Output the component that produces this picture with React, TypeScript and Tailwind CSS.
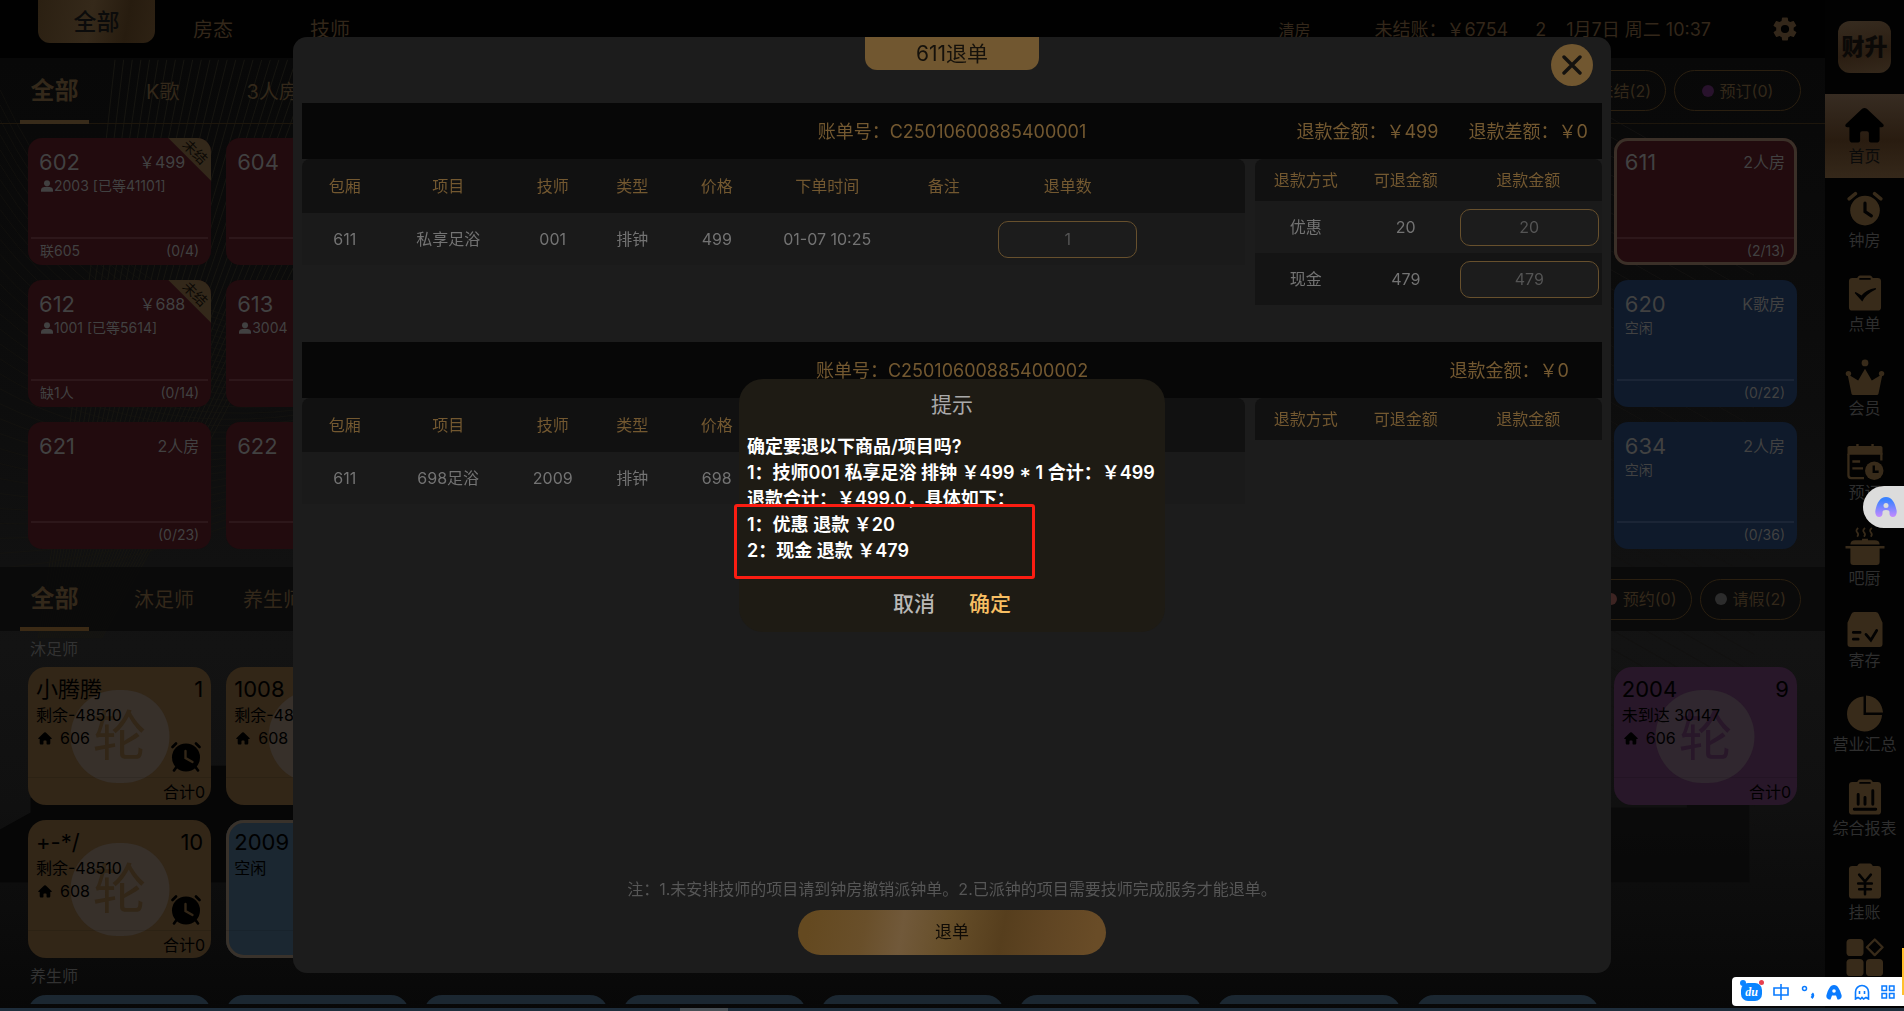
import { useState, type ReactNode } from "react"

interface Room {
  no: string
  kind?: string
  amount?: string
  guest?: string
  status?: string
  note?: string
  usage?: string
  tone: "red" | "blue"
  selected?: boolean
  unpaid?: boolean
  place?: string
}

interface Tech {
  name: string
  order?: string
  status?: string
  room?: string
  total?: string
  tone: "gold" | "blue" | "purple"
  round?: boolean
  alarm?: boolean
  selected?: boolean
  place?: string
}

interface Bill {
  id: string
  sums: string[]
  sumsClass: string
  rows: { room: string; item: string; tech: string; type: string; price: string; time: string; qty?: string }[]
  refunds: { way: string; max: string }[]
}

const rooms: Room[] = [
  { no: "602", amount: "￥499", guest: "2003 [已等41101]", note: "联605", usage: "(0/4)", tone: "red", unpaid: true },
  { no: "604", tone: "red" },
  { no: "611", kind: "2人房", usage: "(2/13)", tone: "red", selected: true, place: "col-start-9" },
  { no: "612", amount: "￥688", guest: "1001 [已等5614]", note: "缺1人", usage: "(0/14)", tone: "red", unpaid: true },
  { no: "613", guest: "3004", tone: "red" },
  { no: "620", kind: "K歌房", status: "空闲", usage: "(0/22)", tone: "blue", place: "col-start-9" },
  { no: "621", kind: "2人房", usage: "(0/23)", tone: "red" },
  { no: "622", tone: "red" },
  { no: "634", kind: "2人房", status: "空闲", usage: "(0/36)", tone: "blue", place: "col-start-9" },
]

const footTechs: Tech[] = [
  { name: "小腾腾", order: "1", status: "剩余-48510", room: "606", total: "合计0", tone: "gold", round: true, alarm: true },
  { name: "1008", status: "剩余-48510", room: "608", tone: "gold", round: true },
  { name: "2004", order: "9", status: "未到达 30147", room: "606", total: "合计0", tone: "purple", round: true, place: "col-start-9" },
  { name: "+-*/", order: "10", status: "剩余-48510", room: "608", total: "合计0", tone: "gold", round: true, alarm: true },
  { name: "2009", status: "空闲", tone: "blue", selected: true },
]

const bills: Bill[] = [
  {
    id: "C25010600885400001",
    sums: ["退款金额：￥499", "退款差额：￥0"],
    sumsClass: "pr-[14px]",
    rows: [{ room: "611", item: "私享足浴", tech: "001", type: "排钟", price: "499", time: "01-07 10:25", qty: "1" }],
    refunds: [
      { way: "优惠", max: "20" },
      { way: "现金", max: "479" },
    ],
  },
  {
    id: "C25010600885400002",
    sums: ["退款金额：￥0"],
    sumsClass: "pr-[33px]",
    rows: [{ room: "611", item: "698足浴", tech: "2009", type: "排钟", price: "698", time: "" }],
    refunds: [],
  },
]

function HouseIcon({ className }: { className?: string }) {
  return (
    <svg viewBox="0 0 40 38" className={className} fill="currentColor">
      <path d="M17.600 1.800a4 4 0 0 1 4.800 0L39 17.500c1.500 1.600.5 3.200-1.200 3.200H35.500V33a3.500 3.500 0 0 1-3.500 3.500h-5.500a2 2 0 0 1-2-2V27a2 2 0 0 0-2-2h-5a2 2 0 0 0-2 2v7.500a2 2 0 0 1-2 2H8A3.500 3.500 0 0 1 4.500 33V20.700H2.200C.5 20.700-.5 19.100 1 17.500z" />
    </svg>
  )
}

function PersonIcon() {
  return (
    <svg viewBox="0 0 12 12" className="size-3" fill="currentColor">
      <circle cx="6" cy="3.200" r="3" />
      <path d="M0 11.800V10c0-2 2-3.200 6-3.200s6 1.200 6 3.200v1.800z" />
    </svg>
  )
}

function AlarmIcon({ className, hand }: { className?: string; hand: string }) {
  return (
    <svg viewBox="0 0 34 34" className={className} fill="none" strokeLinecap="round">
      <circle cx="17" cy="18" r="14" fill="currentColor" />
      <path d="M2 7 8 2M32 7l-6-5" stroke="currentColor" strokeWidth="3.200" />
      <path d="M17 11v8l6 4" stroke={hand} strokeWidth="3" />
    </svg>
  )
}

function Clipboard({ children, tab = true }: { children: ReactNode; tab?: boolean }) {
  return (
    <svg viewBox="0 0 36 38" className="h-[37px] w-9" fill="none" strokeLinecap="round">
      <path
        d="M5 3h5c1-2 2-2.500 4-2.500h8c2 0 3 .5 4 2.500h5a3.500 3.500 0 0 1 3.500 3.500V33A3.500 3.500 0 0 1 31 36.500H5A3.500 3.500 0 0 1 1.500 33V6.500A3.500 3.500 0 0 1 5 3z"
        fill="currentColor"
      />
      {tab && <path d="M13 4h10" stroke="#020202" strokeWidth="2" />}
      {children}
    </svg>
  )
}

const icons = {
  clock: <AlarmIcon className="h-[37px] w-9" hand="#020202" />,
  order: (
    <Clipboard>
      <path d="m8 18 7 8c3-6 8-9 14-12-7 1-11 3.500-14.500 8z" fill="#020202" stroke="#020202" strokeWidth="1.500" />
    </Clipboard>
  ),
  crown: (
    <svg viewBox="0 0 40 38" className="h-[37px] w-10" fill="currentColor">
      <circle cx="20" cy="4" r="3.500" />
      <circle cx="3" cy="15" r="2.800" />
      <circle cx="37" cy="15" r="2.800" />
      <path d="M2 15.500 13 22l7-12 7 12 11-6.500-4.200 20.500q-.4 1-1.500 1H7.700q-1.100 0-1.500-1z" />
    </svg>
  ),
  booking: (
    <svg viewBox="0 0 40 38" className="h-[37px] w-10" fill="none">
      <path d="M2 12V5q0-2 2-2h7V1h2.500v2h13V1H29v2h7q2 0 2 2v7z" fill="currentColor" />
      <path d="M3 11v22q0 3 3 3h13M36.800 10v8M7 19h8M7 26h11" stroke="currentColor" strokeWidth="2.400" />
      <circle cx="29.500" cy="28.500" r="9.500" fill="currentColor" />
      <path d="M29 23v6.500h5" stroke="#020202" strokeWidth="2.400" />
    </svg>
  ),
  pot: (
    <svg viewBox="0 0 40 40" className="h-[39px] w-10" fill="none">
      <path d="M13 1q-3 2.500-1 4.500T12 10M20 1q-3 2.500-1 4.500T19 10M27 1q-3 2.500-1 4.500T26 10" stroke="currentColor" strokeWidth="1.800" />
      <path d="M5 18q0-4.500 5-4.500h7V12h6v1.500h7q5 0 5 4.500zM0 19.500h40V22h-5v14q0 3-3 3H8q-3 0-3-3V22H0z" fill="currentColor" />
    </svg>
  ),
  store: (
    <svg viewBox="0 0 36 38" className="h-[37px] w-9" fill="none" strokeLinecap="round">
      <path d="M7 1h22q2 0 3 2l4 9v22q0 3-3 3H3q-3 0-3-3V12L4 3q1-2 3-2z" fill="currentColor" />
      <path d="M6 22h7M6 29h5M19 24l5 6 6-10" stroke="#020202" strokeWidth="2.800" />
    </svg>
  ),
  pie: (
    <svg viewBox="0 0 38 38" className="h-[37px] w-[38px]" fill="currentColor">
      <path d="M17.500 1.500v19h19A18 18 0 1 1 17.500 1.500z" />
      <path d="M20 .5Q35.500 2 37.500 18H20z" />
    </svg>
  ),
  report: (
    <Clipboard>
      <path d="M11 16v10M18 19v7M26 12v14M7 31h22" stroke="#020202" strokeWidth="3" />
    </Clipboard>
  ),
  debt: (
    <Clipboard tab={false}>
      <path d="m12 12 6 7 6-7M18 19v13M11 21h14M12 27h12" stroke="#020202" strokeWidth="2.600" />
    </Clipboard>
  ),
  apps: (
    <svg viewBox="0 0 40 40" className="h-[39px] w-10 shrink-0" fill="currentColor">
      <rect x="1" y="1" width="17.500" height="17.500" rx="4" />
      <rect x="1" y="21.500" width="17.500" height="17.500" rx="4" />
      <rect x="21" y="21.500" width="17.500" height="17.500" rx="4" />
      <path d="m30 1.500 8 8-8 8-8-8z" fill="none" stroke="currentColor" strokeWidth="2.400" strokeLinejoin="round" />
    </svg>
  ),
}

const menu = [
  { label: "钟房", icon: icons.clock },
  { label: "点单", icon: icons.order },
  { label: "会员", icon: icons.crown },
  { label: "预订", icon: icons.booking },
  { label: "吧厨", icon: icons.pot },
  { label: "寄存", icon: icons.store },
  { label: "营业汇总", icon: icons.pie },
  { label: "综合报表", icon: icons.report },
  { label: "挂账", icon: icons.debt },
]

function Backdrop() {
  const fan = Array.from({ length: 34 }, (_, i) => i)
  return (
    <svg className="absolute inset-0 size-full" viewBox="0 0 1904 1011" preserveAspectRatio="none" fill="none">
      <g stroke="#171510">
        {fan.map(i => (
          <path key={i} d={`M${120 + i * 9} 60Q${90 + i * 6} 330 ${40 + i * 2} 640`} />
        ))}
        {fan.map(i => (
          <path key={i} d={`M0 ${90 + i * 15}Q${130 + i * 2} ${360 + i * 6} 400 ${330 + i * 4}`} opacity="0.600" />
        ))}
      </g>
      <g stroke="#121110">
        {fan.map(i => (
          <path key={i} d={`M1500 ${20 + i * 19}L1830 ${200 + i * 19}`} />
        ))}
      </g>
      <path d="M0 832 32 815V800h90v-14h90v-18h120v117H0z" fill="#060606" />
      <path d="M1600 800h60v10h100v-8h65v83h-225z" fill="#070707" opacity="0.600" />
    </svg>
  )
}

function RoomCard({ room }: { room: Room }) {
  const tone = room.tone === "red" ? "bg-[#220b0e]" : "bg-[#0f1a2b]"
  return (
    <article
      className={`relative flex h-[127px] flex-col overflow-hidden rounded-[14px] text-[#414141] ${tone} ${room.place ?? ""} ${
        room.selected ? "ring-3 ring-[#3b3028] ring-inset" : ""
      }`}
    >
      <div className={`flex items-center justify-between pt-[10px] pl-[11px] leading-7 ${room.unpaid ? "pr-[26px]" : "pr-3"}`}>
        <h3 className="text-[22px]">{room.no}</h3>
        <span className="text-base">{room.amount ?? room.kind}</span>
      </div>
      <div className="flex grow items-start px-[11px] text-sm leading-5">
        {room.guest && (
          <span className="flex items-center gap-px whitespace-nowrap pl-[2px]">
            <PersonIcon />
            {room.guest}
          </span>
        )}
        {room.status}
      </div>
      <div className="mx-[3px] flex h-7 justify-between border-t-2 border-white/5 px-[9px] text-sm leading-6">
        <span>{room.note}</span>
        <span>{room.usage}</span>
      </div>
      {room.unpaid && (
        <div className="absolute top-0 right-0 size-[43px] bg-[#33281a] text-[#0c0905] [clip-path:polygon(0_0,100%_0,100%_100%)]">
          <span className="absolute top-[6px] left-[13px] rotate-45 text-sm leading-4">未结</span>
        </div>
      )}
    </article>
  )
}

const techTones = {
  gold: "bg-[#322617]",
  blue: "bg-[#1b2731]",
  purple: "bg-[#281729]",
}

const roundTones = {
  gold: "bg-[#37302a] text-[#322617]",
  blue: "",
  purple: "bg-[#30272f] text-[#281729]",
}

function TechCard({ tech }: { tech: Tech }) {
  return (
    <article
      className={`relative flex h-[138px] flex-col overflow-hidden rounded-[18px] text-black ${techTones[tech.tone]} ${tech.place ?? ""} ${
        tech.selected ? "ring-3 ring-[#39322b] ring-inset" : ""
      }`}
    >
      {tech.round && (
        <span
          className={`absolute top-[23px] left-1/2 flex h-[93px] w-[99px] -translate-x-1/2 items-center justify-center rounded-full text-[54px] ${roundTones[tech.tone]}`}
        >
          轮
        </span>
      )}
      <div className="relative flex justify-between px-2 pt-[7px] text-[22px] leading-[30px]">
        <h3>{tech.name}</h3>
        <span>{tech.order}</span>
      </div>
      <p className="relative px-2 leading-[22px] whitespace-nowrap">{tech.status}</p>
      {tech.room && (
        <p className="relative flex items-center gap-2 pl-[10px] leading-6">
          <HouseIcon className="h-[13px] w-[14px]" />
          {tech.room}
        </p>
      )}
      <div className="relative mt-auto h-7 border-t border-black/10 px-[6px] text-right leading-7">{tech.total}</div>
      {tech.alarm && (
        <svg viewBox="0 0 30 30" className="absolute right-[10px] bottom-[33px] size-[30px]" fill="none" strokeLinecap="round">
          <circle cx="15" cy="15.500" r="14" fill="currentColor" />
          <path d="M1.500 5 5 1.500M28.500 5 25 1.500M5.500 25 3 28.500M24.500 25l2.500 3.500" stroke="currentColor" strokeWidth="2.600" />
          <path d="M14.500 9v7l7 4" stroke="#322617" strokeWidth="2.400" />
        </svg>
      )}
    </article>
  )
}

function Pill({ dot, children }: { dot: string; children: ReactNode }) {
  return (
    <button className="flex h-[41px] items-center gap-[6px] rounded-full border border-[#2a1f10] px-[14px] text-base text-[#33281a]">
      <span className={`size-3 rounded-full ${dot}`} />
      {children}
    </button>
  )
}

function QtyInput({ value, label }: { value: string; label: string }) {
  return (
    <input
      aria-label={label}
      defaultValue={value}
      className="block h-[37px] w-[139px] rounded-[10px] border border-[#67502d] bg-[#1c1c1c] text-center text-base text-[#545454]"
    />
  )
}

function BillBlock({ bill }: { bill: Bill }) {
  return (
    <section>
      <div className="grid h-14 grid-cols-[1fr_auto_1fr] items-center bg-[#070707] pt-[2px] text-lg text-[#735830]">
        <span className="col-start-2">账单号：{bill.id}</span>
        <div className={`flex justify-end gap-[30px] whitespace-nowrap ${bill.sumsClass}`}>
          {bill.sums.map(s => (
            <span key={s}>{s}</span>
          ))}
        </div>
      </div>
      <div className="flex items-start gap-[10px]">
        <table className="grow table-fixed text-center text-base">
          <colgroup>
            <col className="w-[85px]" />
            <col className="w-[122px]" />
            <col className="w-[87px]" />
            <col className="w-[72px]" />
            <col className="w-[97px]" />
            <col className="w-[124px]" />
            <col className="w-[109px]" />
            <col className="w-[139px]" />
            <col />
          </colgroup>
          <thead>
            <tr className="h-[54px] bg-[#111111] text-[#735830]">
              {["包厢", "项目", "技师", "类型", "价格", "下单时间", "备注", "退单数", ""].map((h, i) => (
                <th key={i} className="font-normal first:rounded-tl-lg last:rounded-tr-lg">
                  {h}
                </th>
              ))}
            </tr>
          </thead>
          <tbody>
            {bill.rows.map(r => (
              <tr key={r.item} className="h-[52px] bg-[#1a1a1a] text-[#737373]">
                <td>{r.room}</td>
                <td>{r.item}</td>
                <td>{r.tech}</td>
                <td>{r.type}</td>
                <td>{r.price}</td>
                <td>{r.time}</td>
                <td />
                <td>{r.qty && <QtyInput value={r.qty} label="退单数" />}</td>
                <td />
              </tr>
            ))}
          </tbody>
        </table>
        <table className="w-[347px] shrink-0 table-fixed text-center text-base">
          <colgroup>
            <col className="w-[102px]" />
            <col className="w-[98px]" />
            <col />
          </colgroup>
          <thead>
            <tr className="h-[42px] bg-[#111111] text-[#735830]">
              {["退款方式", "可退金额", "退款金额"].map((h, i) => (
                <th key={i} className="font-normal first:rounded-tl-lg last:rounded-tr-lg">
                  {h}
                </th>
              ))}
            </tr>
          </thead>
          <tbody>
            {bill.refunds.map(r => (
              <tr key={r.way} className="h-[52px] bg-[#1a1a1a] text-[#737373] even:bg-[#141414]">
                <td>{r.way}</td>
                <td>{r.max}</td>
                <td>
                  <div className="flex justify-end pr-[3px]">
                    <QtyInput value={r.max} label={`${r.way}退款金额`} />
                  </div>
                </td>
              </tr>
            ))}
          </tbody>
        </table>
      </div>
    </section>
  )
}

function RefundDialog() {
  return (
    <div className="fixed inset-0 flex justify-center pt-[37px] pb-[38px]">
      <div role="dialog" aria-label="611退单" className="relative flex w-[69.2%] flex-col rounded-[14px] bg-[#1c1c1c] px-[9px]">
        <h2 className="mx-auto h-[33px] w-[174px] rounded-b-xl bg-[#715730] text-center text-[21px] leading-[34px] text-[#15110b]">
          611退单
        </h2>
        <button
          aria-label="关闭"
          className="absolute top-[7px] right-[18px] flex size-[42px] items-center justify-center rounded-full bg-[#715730]"
        >
          <svg viewBox="0 0 20 20" className="size-5" stroke="#14120f" strokeWidth="3.400" strokeLinecap="round">
            <path d="m2 2 16 16M18 2 2 18" />
          </svg>
        </button>
        <div className="mt-[33px] flex grow flex-col gap-[37px]">
          {bills.map(b => (
            <BillBlock key={b.id} bill={b} />
          ))}
        </div>
        <p className="mb-[9px] text-center text-base text-[#565656]">
          注：1.未安排技师的项目请到钟房撤销派钟单。2.已派钟的项目需要技师完成服务才能退单。
        </p>
        <button className="mx-auto mb-[18px] h-[45px] w-[308px] shrink-0 rounded-full bg-[linear-gradient(100deg,#644920_4%,#694f2a_22%,#71593a_34%,#674f2a_48%,#563e1d_66%,#604523_80%,#694c27_96%)] text-[17px] text-[#0e0a05]">
          退单
        </button>
      </div>
    </div>
  )
}

function ConfirmDialog({ onClose }: { onClose: () => void }) {
  return (
    <div className="fixed inset-0 flex items-center justify-center">
      <div role="alertdialog" aria-label="提示" className="relative w-[426px] rounded-[24px] bg-[#1e1b14] px-2 pt-[11px]">
        <h2 className="text-center text-[21px] leading-[30px] text-[#a9a9a9]">提示</h2>
        <div className="mt-[14px] text-lg leading-[26px] font-semibold whitespace-nowrap text-white">
          <p>确定要退以下商品/项目吗?</p>
          <p>1：技师001 私享足浴 排钟 ￥499 * 1 合计：￥499</p>
          <p>退款合计：￥499.0，具体如下：</p>
          <p>1：优惠 退款 ￥20</p>
          <p>2：现金 退款 ￥479</p>
        </div>
        <div className="flex justify-center gap-[34px] pt-[25px] pb-[13px] text-[21px] leading-[30px] font-medium">
          <button onClick={onClose} className="text-[#b9b8b6]">
            取消
          </button>
          <button onClick={onClose} className="text-[#f8bf63]">
            确定
          </button>
        </div>
        <div className="absolute top-[125px] -left-[5px] h-[75px] w-[301px] rounded-[3px] border-3 border-[#fb1d12]" />
      </div>
    </div>
  )
}

function ImeBar() {
  return (
    <div className="fixed right-0 bottom-[5px] flex h-[29px] w-[172px] items-center justify-between rounded-l-sm bg-white px-[9px] text-[#0a7bff]">
      <span className="relative flex h-[18px] w-[21px] items-center justify-center rounded-[7px] bg-[#0a84ff] font-['Liberation_Serif',serif] text-xs font-bold text-white italic">
        du
        <span className="absolute -top-[3px] -left-px size-[6px] rounded-full bg-[#0a84ff]" />
        <span className="absolute -top-[3px] -right-[2px] size-[5px] rounded-full bg-[#e8404f]" />
      </span>
      <svg viewBox="0 0 16 16" className="size-4" fill="none" stroke="currentColor" strokeWidth="1.600">
        <path d="M1 4h14v7H1zM8 0v16" />
      </svg>
      <svg viewBox="0 0 14 16" className="h-4 w-[14px]" fill="none" stroke="currentColor" strokeWidth="1.500">
        <circle cx="3.500" cy="4.500" r="2" />
        <path d="M11 9.500q2 2-.5 4.500" strokeWidth="2.600" />
      </svg>
      <svg viewBox="0 0 16 16" className="size-4" fill="currentColor">
        <path d="M8 1c4 0 6 5 7.500 10 .8 3-1.500 4.500-4 4.500L10 11.500H6L4.500 15.500c-2.500 0-4.800-1.500-4-4.500C2 6 4 1 8 1z" />
        <circle cx="8" cy="7" r="1.800" fill="#fff" />
      </svg>
      <svg viewBox="0 0 16 16" className="size-4" fill="none" stroke="currentColor" strokeWidth="1.600">
        <path d="M1.500 15V8a6.500 6.500 0 0 1 13 0v7l-2.500-1.500L9.500 15 8 13.500 6.500 15 4 13.500zM5.500 7v3M10.500 7v3" />
      </svg>
      <svg viewBox="0 0 14 14" className="size-[14px]" fill="none" stroke="currentColor" strokeWidth="1.500">
        <path d="M1 1h4.500v4.500H1zM8.500 1H13v4.500H8.500zM1 8.500h4.500V13H1zM8.500 8.500H13V13H8.500z" />
      </svg>
    </div>
  )
}

export default function App() {
  const [confirming, setConfirming] = useState(true)

  return (
    <div className="relative flex h-screen flex-col overflow-hidden bg-[#0b0b0b] font-['Inter','Noto_Sans_CJK_SC',sans-serif] text-base">
      <div className="flex min-h-0 grow">
        <main className="relative flex min-w-0 grow flex-col bg-[linear-gradient(180deg,#080808_6%,#0d0d0d_40%,#131313_64%,#101010_80%,#080808)]">
          <Backdrop />
          <header className="relative flex h-[58px] shrink-0 items-center bg-[#010101] pr-[26px] pl-[38px] text-[#33271a]">
            <button className="h-[43px] w-[117px] self-start rounded-b-xl bg-[linear-gradient(100deg,#2b2012,#35291a_45%,#271c0f_75%,#2e2214)] pt-[2px] text-[23px] font-medium text-[#0b0b0b]">
              全部
            </button>
            <nav className="flex grow gap-[77px] pt-px pl-[38px] text-xl">
              <button>房态</button>
              <button>技师</button>
            </nav>
            <div className="flex items-center pt-px text-lg whitespace-nowrap">
              <span className="text-base">清房</span>
              <span className="ml-16">未结账：￥6754</span>
              <span className="ml-[27px]">2</span>
              <span className="ml-5">1月7日 周二 10:37</span>
            </div>
            <button aria-label="设置" className="ml-[60px]">
              <svg viewBox="0 0 24 24" className="size-7" fill="currentColor">
                <path d="M19.400 13a7.500 7.500 0 0 0 0-2l2.100-1.600a.5.5 0 0 0 .1-.6l-2-3.500a.5.5 0 0 0-.6-.2l-2.500 1a7.300 7.300 0 0 0-1.700-1l-.4-2.600a.5.500 0 0 0-.5-.4h-4a.5.500 0 0 0-.5.400L9 5.100a7.700 7.700 0 0 0-1.700 1l-2.500-1a.5.500 0 0 0-.6.200l-2 3.500a.5.500 0 0 0 .1.600L4.500 11a7.900 7.900 0 0 0 0 2l-2.100 1.600a.5.500 0 0 0-.1.600l2 3.500c.1.200.4.300.6.200l2.500-1c.5.400 1.100.7 1.700 1l.4 2.600c0 .2.200.4.500.4h4c.2 0 .5-.2.500-.4l.4-2.600c.6-.3 1.200-.6 1.700-1l2.500 1c.2.100.5 0 .6-.2l2-3.500a.5.500 0 0 0-.1-.6zM12 15.500a3.500 3.500 0 1 1 0-7 3.500 3.500 0 0 1 0 7z" />
              </svg>
            </button>
          </header>

          <div className="relative flex h-[66px] shrink-0 items-center justify-between border-b border-[#1d160c] pr-6 pl-5 text-xl text-[#33281a]">
            <nav className="flex h-full items-center">
              <button className="h-[66px] w-[69px] self-start border-b-4 border-[#382b1a] pt-1 text-2xl font-bold">全部</button>
              <button className="ml-[57px] pt-[2px]">K歌</button>
              <button className="ml-[67px] pt-[2px]">3人房</button>
            </nav>
            <div className="flex gap-2">
              <Pill dot="bg-[#220b0e]">未结(2)</Pill>
              <button className="flex h-[41px] w-[127px] items-center justify-center gap-[6px] rounded-full border border-[#2a1f10] text-base">
                <span className="size-3 rounded-full bg-[#28122c]" />
                预订(0)
              </button>
            </div>
          </div>

          <section className="relative grid shrink-0 grid-cols-9 gap-[15px] px-7 pt-[14px] pb-[18px]">
            {rooms.map(r => (
              <RoomCard key={r.no} room={r} />
            ))}
          </section>

          <div className="relative flex h-16 shrink-0 items-center justify-between bg-[#0a0a0a]/90 pr-6 pl-5 text-xl text-[#33281a]">
            <nav className="flex h-full items-center">
              <button className="h-16 w-[69px] self-start border-b-4 border-[#3b2a15] pt-1 text-2xl font-bold">全部</button>
              <button className="ml-[45px] pt-px">沐足师</button>
              <button className="ml-[49px] pt-px">养生师</button>
            </nav>
            <div className="flex gap-2">
              <Pill dot="bg-[#3d2422]">预约(0)</Pill>
              <Pill dot="bg-[#2c2c2c]">请假(2)</Pill>
            </div>
          </div>

          <section className="relative mb-[4px] min-h-0 grow overflow-hidden px-7 text-[#323232]">
            <h3 className="px-[2px] leading-[36px]">沐足师</h3>
            <div className="grid grid-cols-9 gap-[15px]">
              {footTechs.map(t => (
                <TechCard key={t.name} tech={t} />
              ))}
            </div>
            <h3 className="px-[2px] leading-[37px]">养生师</h3>
            <div className="grid grid-cols-9 gap-[15px]">
              {Array.from({ length: 8 }, (_, i) => (
                <div key={i} className="h-[138px] rounded-[18px] bg-[#1b2731]" />
              ))}
            </div>
          </section>
        </main>

        <aside className="w-[79px] shrink-0 overflow-hidden bg-[#020202] text-[#2e2e2e]">
          <div className="mx-auto mt-[21px] mb-[21px] flex h-[52px] w-[53px] items-center justify-center rounded-xl bg-[linear-gradient(170deg,#372c20,#2b1e12_60%,#35291c)] text-[23px] font-black text-[#0b0907]">
            财升
          </div>
          <nav>
            <a
              href="#"
              className="flex h-[84px] flex-col items-center bg-[linear-gradient(180deg,#372c22,#291c10_55%,#35281a)] pt-[13px] text-[#0a0a0a]"
            >
              <HouseIcon className="h-[37px] w-[39px] text-black" />
              <span className="leading-6">首页</span>
            </a>
            {menu.map(m => (
              <a key={m.label} href="#" className="flex h-[84px] flex-col items-center pt-[13px]">
                <span className="text-[#382b1a]">{m.icon}</span>
                <span className="leading-6">{m.label}</span>
              </a>
            ))}
            <a href="#" aria-label="更多" className="flex justify-center pt-1 text-[#382b1a]">
              {icons.apps}
            </a>
          </nav>
        </aside>
      </div>
      <div className="relative h-[3px] shrink-0 bg-[#1e2d3b]">
        <div className="ml-[680px] h-full w-12 bg-[#474f55]" />
      </div>

      <RefundDialog />
      {confirming && <ConfirmDialog onClose={() => setConfirming(false)} />}

      <button aria-label="助手" className="fixed top-[486px] right-0 flex h-[42px] w-[41px] items-center rounded-l-full bg-[#dcdcdc] pl-3">
        <svg viewBox="0 0 22 22" className="size-[22px]">
          <defs>
            <linearGradient id="assist" x1="0" y1="0" x2="0" y2="1">
              <stop offset="0.150" stopColor="#3b82ff" />
              <stop offset="1" stopColor="#c58bff" />
            </linearGradient>
          </defs>
          <path
            d="M11 1c6 0 9 6 10.500 13 .9 4-1 7-3.700 7-2 0-3.300-1.500-3.300-3.500V16q0-2-3.500-2t-3.500 2v1.500c0 2-1.300 3.500-3.300 3.500-2.700 0-4.600-3-3.700-7C2 7 5 1 11 1z"
            fill="url(#assist)"
          />
          <circle cx="11" cy="9.500" r="2.500" fill="#dcdcdc" />
        </svg>
      </button>
      <ImeBar />
      <div className="fixed right-0 bottom-[16px] h-[47px] w-[2px] bg-[#ffc02e]" />
    </div>
  )
}
